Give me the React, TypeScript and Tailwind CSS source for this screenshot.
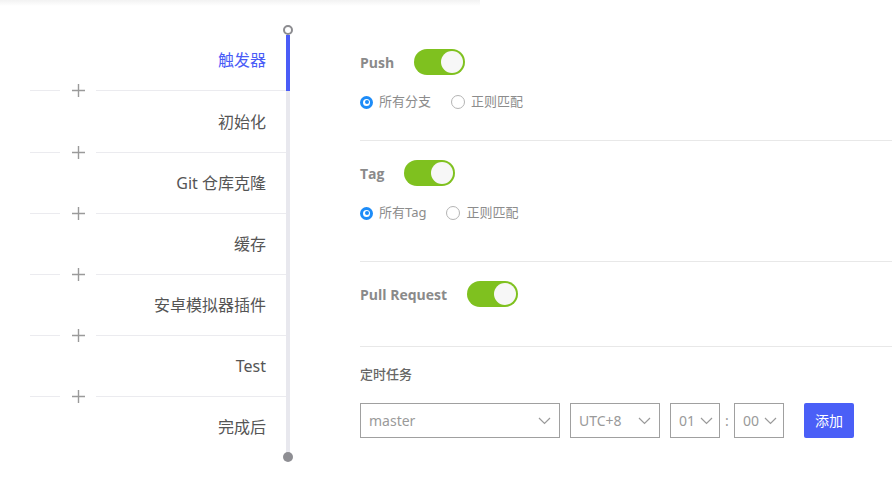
import React from 'react';

const font = { fontFamily: '"Noto Sans", "Noto Sans CJK SC", sans-serif' };

const steps = ['触发器', '初始化', 'Git 仓库克隆', '缓存', '安卓模拟器插件', 'Test', '完成后'];

const PlusIcon: React.FC = () => (
  <svg width="15" height="15" viewBox="0 0 15 15" className="shrink-0">
    <path d="M7.5 1v13M1 7.5h13" stroke="#9a9a9a" strokeWidth="1.4" fill="none" />
  </svg>
);

const Chevron: React.FC = () => (
  <svg width="13" height="8" viewBox="0 0 13 8" className="shrink-0">
    <path d="M1 1l5.5 5.5L12 1" stroke="#9a9a9a" strokeWidth="1.2" fill="none" />
  </svg>
);

const Toggle: React.FC = () => (
  <div className="w-[51px] h-[26px] rounded-full bg-[#7fc11f] flex items-center justify-end pr-[2px] shrink-0">
    <div className="w-[22px] h-[22px] rounded-full bg-[#f7f7f7]" />
  </div>
);

const Radio: React.FC<{ checked?: boolean; label: string }> = ({ checked, label }) => (
  <div className="flex items-center gap-[6px]">
    {checked ? (
      <div className="w-[13px] h-[13px] rounded-full bg-[#1d8cf8] flex items-center justify-center">
        <div className="w-[7px] h-[7px] rounded-full bg-white flex items-center justify-center">
          <div className="w-[4px] h-[4px] rounded-full bg-[#1d8cf8]" />
        </div>
      </div>
    ) : (
      <div className="w-[14px] h-[14px] rounded-full border border-[#b4b4b4] bg-white" />
    )}
    <span className="text-[13px] text-[#8c8c8c]">{label}</span>
  </div>
);

const Divider: React.FC = () => (
  <div className="h-px flex items-center">
    <div className="w-[30px] h-px bg-[#ebebef]" />
    <div className="w-[36px] flex justify-center">
      <PlusIcon />
    </div>
    <div className="flex-1 h-px bg-[#ebebef]" />
  </div>
);

const Select: React.FC<{ value: string; w: string; pad?: string }> = ({ value, w, pad }) => (
  <div className={`${w} h-[35px] border border-[#a0a0a0] flex items-center justify-between ${pad ?? 'pl-2 pr-2'}`}>
    <span className="text-[14px] text-[#9a9a9a]">{value}</span>
    <Chevron />
  </div>
);

export default function App() {
  return (
    <div className="w-[892px] h-[504px] bg-white flex flex-col overflow-hidden" style={font}>
      <div className="h-[6px] w-[480px] bg-gradient-to-b from-[#f2f2f2] to-white shrink-0" />
      <div className="flex flex-1">
        {/* steps */}
        <div className="flex pl-[30px] w-[290px] shrink-0">
          <div className="w-[256px] flex flex-col pt-[24px]">
            {steps.map((s, i) => (
              <React.Fragment key={s}>
                {i > 0 && <Divider />}
                <div
                  className={`${i === 1 ? 'h-[61px]' : 'h-[60px]'} flex items-center justify-end pr-5 text-[16px] ${
                    i === 0 ? 'text-[#4a5cf7]' : 'text-[#555555]'
                  }`}
                >
                  {s}
                </div>
              </React.Fragment>
            ))}
          </div>
          <div className="w-[4px] flex flex-col items-center">
            <div className="mt-[19px] w-[10px] h-[10px] rounded-full border-2 border-[#8c8c90] bg-white shrink-0" />
            <div className="w-[4px] h-[56px] bg-[#4a5cf7] shrink-0" />
            <div className="w-[4px] h-[362px] bg-[#e8e8ee] shrink-0" />
            <div className="w-[10px] h-[10px] rounded-full bg-[#8e8e93] shrink-0 -mt-[1px]" />
          </div>
        </div>

        {/* triggers */}
        <div className="flex-1 pl-[70px] flex flex-col">
          <div className="pt-[43px] pb-[28px] border-b border-[#e8e8e8]">
            <div className="h-[26px] flex items-center gap-5">
              <span className="text-[14px] font-bold text-[#8a8a8a]" style={{ fontFamily: '"Open Sans", sans-serif' }}>Push</span>
              <Toggle />
            </div>
            <div className="mt-[17px] h-[20px] flex items-center gap-5">
              <Radio checked label="所有分支" />
              <Radio label="正则匹配" />
            </div>
          </div>

          <div className="pt-[19px] pb-[38px] border-b border-[#e8e8e8]">
            <div className="h-[26px] flex items-center gap-5">
              <span className="text-[14px] font-bold text-[#8a8a8a]" style={{ fontFamily: '"Open Sans", sans-serif' }}>Tag</span>
              <Toggle />
            </div>
            <div className="mt-[17px] h-[20px] flex items-center gap-5">
              <Radio checked label="所有Tag" />
              <Radio label="正则匹配" />
            </div>
          </div>

          <div className="pt-[19px] pb-[39px] border-b border-[#e8e8e8]">
            <div className="h-[26px] flex items-center gap-5">
              <span className="text-[14px] font-bold text-[#8a8a8a]" style={{ fontFamily: '"Open Sans", sans-serif' }}>Pull Request</span>
              <Toggle />
            </div>
          </div>

          <div className="pt-[18px]">
            <div className="h-[20px] flex items-center text-[13px] font-medium text-[#666666]">定时任务</div>
            <div className="mt-[18px] flex items-center">
              <Select value="master" w="w-[200px]" pad="pl-2 pr-[8px]" />
              <div className="ml-[10px]">
                <Select value="UTC+8" w="w-[90px]" pad="pl-2 pr-[8px]" />
              </div>
              <div className="ml-[10px]">
                <Select value="01" w="w-[50px]" pad="pl-2 pr-[6px]" />
              </div>
              <span className="w-[14px] text-center text-[14px] text-[#9a9a9a]">:</span>
              <Select value="00" w="w-[50px]" pad="pl-2 pr-[6px]" />
              <button className="ml-[20px] w-[50px] h-[35px] rounded-[2px] bg-[#4a5ff7] text-white text-[14px]">添加</button>
            </div>
          </div>
        </div>
      </div>
    </div>
  );
}
